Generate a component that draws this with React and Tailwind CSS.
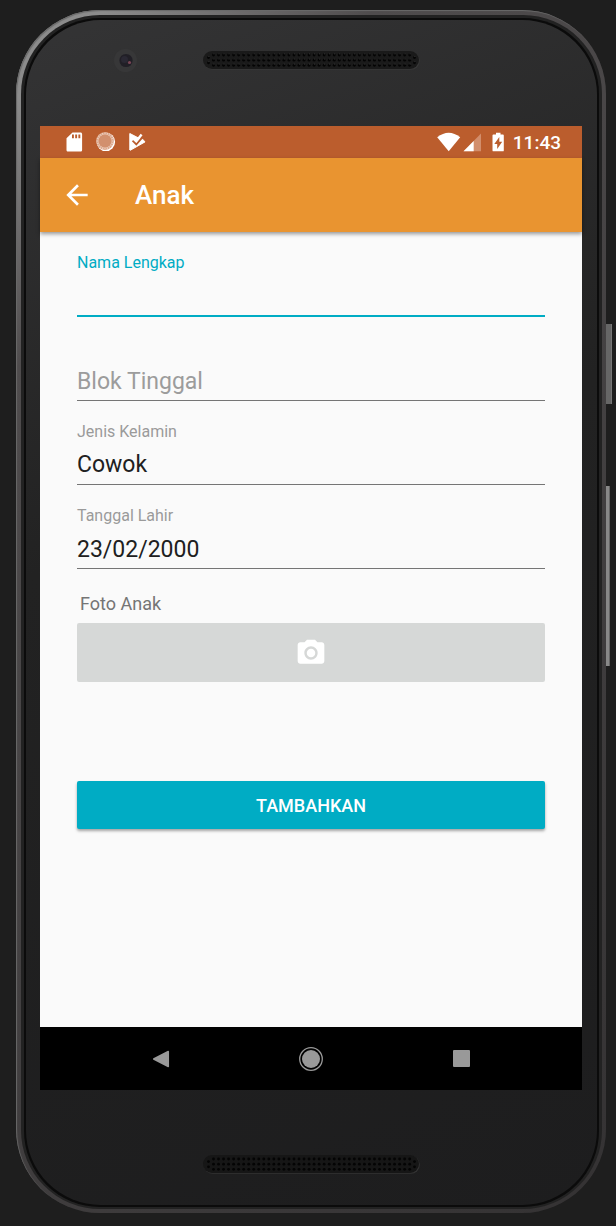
import React from "react";
import { MdArrowBack, MdPhotoCamera } from "react-icons/md";

const columns = Array.from({ length: 40 }, (_, i) => 10.5 + i * 5.03);

function SpeakerGrille({ dim }) {
  const dots = [
    ...columns.flatMap((x) => [4, 9.2, 14.3].map((y) => [x, y])),
    [5.5, 6.6],
    [5.5, 11.8],
    [211.5, 6.6],
    [211.5, 11.8],
  ];
  return (
    <svg width="217" height="19" viewBox="0 0 217 19" aria-hidden="true">
      <rect x="0.8" y="0.8" width="216" height="18" rx="9" fill={dim ? "#333" : "#383838"} />
      <rect x="0" y="0" width="216" height="18" rx="9" fill={dim ? "#161616" : "#1a1a1a"} />
      {dots.map(([x, y], i) => (
        <g key={i}>
          <circle cx={x} cy={y} r="1.4" fill="#040404" />
          {!dim && <circle cx={x + 0.4} cy={y - 1.2} r="0.6" fill="#363636" />}
        </g>
      ))}
    </svg>
  );
}

function FrontCamera() {
  return (
    <svg width="24" height="24" viewBox="0 0 24 24" aria-hidden="true">
      <circle cx="11.5" cy="11.500" r="11.5" fill="#373738" />
      <circle cx="12" cy="11.500" r="6.6" fill="#211f26" />
      <circle cx="10.5" cy="10.500" r="3.5" fill="#2a2833" />
      <circle cx="15.5" cy="13.500" r="1.6" fill="#7a4656" />
    </svg>
  );
}

function StatusBar() {
  const ticks = Array.from({ length: 20 }, (_, i) => i * 18);
  return (
    <div className="flex h-8 items-center justify-between bg-[#bb5d2d] pl-[26px] pr-[21px] text-white">
      <div className="flex items-center gap-[13px]">
        <svg width="17" height="20" viewBox="0 0 17 20" aria-hidden="true">
          <path
            fill="#fff"
            fillRule="evenodd"
            d="M6.500.5h8c.9 0 1.600.7 1.600 1.600v15.800c0 .9-.7 1.600-1.600 1.600h-12.400c-.9 0-1.600-.7-1.600-1.600V6.300zM6 2.600v3.700h1.900V2.600zm3.200 0v3.700h1.900V2.600zm3.200 0v3.700h1.900V2.600z"
          />
        </svg>
        <svg width="20" height="20" viewBox="0 0 20 20" aria-hidden="true">
          <circle cx="9.8" cy="9.8" r="9.300" fill="#fff" />
          <circle cx="9" cy="9" r="8.900" fill="#dda88c" />
          <circle cx="9" cy="9" r="6.500" fill="#d2906e" />
          {ticks.map((a) => (
            <path key={a} d="M9 .7v1.900" stroke="#f0d8cc" strokeWidth=".8" transform={`rotate(${a} 9 9)`} />
          ))}
        </svg>
        <svg width="17" height="20" viewBox="0 0 17 20" aria-hidden="true">
          <path
            fill="#fff"
            stroke="#fff"
            strokeLinejoin="round"
            d="M.8 1.500L8 5.200 10.500 6.500 13.600 7.200 16 9.900 1.200 18.300.8 18z"
          />
          <path d="M3.600 8.600L7.300 12.200 14.800 3.600" fill="none" stroke="#bb5d2d" strokeWidth="2" />
          <path d="M4.800 6.800L7.300 9.200 12.600 2.400" fill="none" stroke="#fff" strokeWidth="2.400" />
        </svg>
      </div>
      <div className="flex items-center">
        <svg width="68" height="20" viewBox="0 0 68 20" aria-hidden="true">
          <path d="M1.200 5.300Q12.700-3.800 24.200 5.300L12.700 19.300z" fill="#fff" />
          <path d="M45 1.500V19.300H27.500z" fill="#d28e6c" />
          <path d="M37.700 8.900V19.300H27.500z" fill="#fff" />
          <path
            fill="#fff"
            fillRule="evenodd"
            d="M60 .7h4.500v1.800h2.400c.6 0 .9.4.9.9v15c0 .6-.3.9-.9.9h-9.500c-.6 0-.9-.3-.9-.9v-15c0-.5.3-.9.9-.9H60zM63.300 5l-5 7h2.900v5l5-7.200h-2.900z"
          />
        </svg>
        <span className="ml-[9px] pt-px text-[19px] font-medium leading-6">11:43</span>
      </div>
    </div>
  );
}

const labelStyle = "block h-5 text-base leading-[22px]";

const control =
  "block h-11 w-full appearance-none rounded-none border-b border-[#757575] bg-transparent p-0 pt-[5px] text-[23px] text-[#202020] outline-none placeholder:text-[#9c9c9c]";

function Field({ id, label, children }) {
  return (
    <div>
      <label htmlFor={id} className={`${labelStyle} text-[#9a9a9a]`}>
        {label}
      </label>
      {children}
    </div>
  );
}

function ChildForm() {
  return (
    <form className="px-[37px] pb-6 pt-5" onSubmit={(e) => e.preventDefault()}>
      <div className="flex flex-col gap-5">
        <div>
          <label htmlFor="nama" className={`${labelStyle} text-[#00acc4]`}>
            Nama Lengkap
          </label>
          <input
            id="nama"
            type="text"
            className="block h-[45px] w-full border-b-2 border-[#00acc4] bg-transparent p-0 text-[23px] text-[#202020] outline-none"
          />
        </div>
        <div className="pt-5">
          <input id="blok" type="text" aria-label="Blok Tinggal" placeholder="Blok Tinggal" className={control} />
        </div>
        <Field id="kelamin" label="Jenis Kelamin">
          <select id="kelamin" defaultValue="Cowok" className={control}>
            <option>Cowok</option>
          </select>
        </Field>
        <Field id="lahir" label="Tanggal Lahir">
          <input id="lahir" type="text" defaultValue="23/02/2000" className={control} />
        </Field>
      </div>
      <label htmlFor="foto" className="mb-[7px] ml-[3px] mt-[23px] block text-[18px] leading-6 text-[#757575]">
        Foto Anak
      </label>
      <button
        id="foto"
        type="button"
        className="flex h-[59px] w-full items-center justify-center rounded-[2px] bg-[#d6d8d7] text-white"
      >
        <MdPhotoCamera size={32} aria-hidden="true" />
      </button>
      <button
        type="submit"
        className="mt-[99px] h-12 w-full rounded-[2px] bg-[#00acc4] text-[18px] font-medium text-white shadow-[0_2px_3px_rgba(0,0,0,0.35)]"
      >
        TAMBAHKAN
      </button>
    </form>
  );
}

function NavigationBar() {
  return (
    <nav className="grid h-[63px] grid-cols-3 bg-black px-[46px]">
      <button type="button" aria-label="Kembali" className="flex items-center justify-center">
        <svg width="18" height="18" viewBox="0 0 18 18">
          <path d="M16.300 1.500v15L1.700 9z" fill="#999" stroke="#999" strokeWidth="1.500" strokeLinejoin="round" />
        </svg>
      </button>
      <button type="button" aria-label="Beranda" className="flex items-center justify-center">
        <svg width="24" height="24" viewBox="0 0 24 24">
          <circle cx="12" cy="12" r="11.300" fill="none" stroke="#999" strokeWidth="1.300" />
          <circle cx="12" cy="12" r="9" fill="#999" />
        </svg>
      </button>
      <button type="button" aria-label="Aplikasi terbaru" className="flex items-center justify-center">
        <span className="size-[17px] rounded-[1px] bg-[#999]" />
      </button>
    </nav>
  );
}

export default function App() {
  return (
    <div className="flex min-h-screen flex-col bg-[#1e1e1e] pb-[13px] pl-4 pr-[10px] pt-[10px] font-['Roboto',sans-serif]">
      <div className="relative flex flex-1 flex-col rounded-[84px] bg-linear-135 from-[#8c8c8c] from-5% via-[#4f4c4d] via-20% to-[#343233] p-[5px] pb-[4px] pr-[4px] shadow-[inset_1px_1px_1px_#6a6a6a]">
        <div className="absolute left-full top-[314px] h-20 w-[6px] border-r border-[#777] bg-[#666]" />
        <div className="absolute left-full top-[476px] h-[180px] w-1 border-r border-[#666] bg-[#888]" />
        <div className="flex flex-1 flex-col rounded-[79px] bg-[#222] p-[3px] pb-[2px]">
          <div className="flex flex-1 flex-col rounded-[76px] bg-[#0b0b0b] p-[2px]">
            <div className="flex flex-1 flex-col rounded-[75px] bg-linear-160 from-[#343435] via-[#222] via-40% to-[#1d1d1e] pl-[14px] pr-[15px]">
              <div className="relative flex h-[106px] justify-center pt-[31px]">
                <div className="absolute left-[74px] top-[29px]">
                  <FrontCamera />
                </div>
                <SpeakerGrille />
              </div>
              <main className="flex flex-1 flex-col bg-[#fafafa]">
                <StatusBar />
                <header className="flex h-[74px] items-center bg-[#e99430] pl-[21px] text-white shadow-[0_2px_4px_rgba(0,0,0,0.4)]">
                  <button type="button" aria-label="Kembali">
                    <MdArrowBack size={32} />
                  </button>
                  <h1 className="ml-[42px] text-[26px] font-medium leading-8">Anak</h1>
                </header>
                <div className="flex-1">
                  <ChildForm />
                </div>
                <NavigationBar />
              </main>
              <div className="flex h-[115px] justify-center pt-[65px]">
                <SpeakerGrille dim />
              </div>
            </div>
          </div>
        </div>
      </div>
    </div>
  );
}
